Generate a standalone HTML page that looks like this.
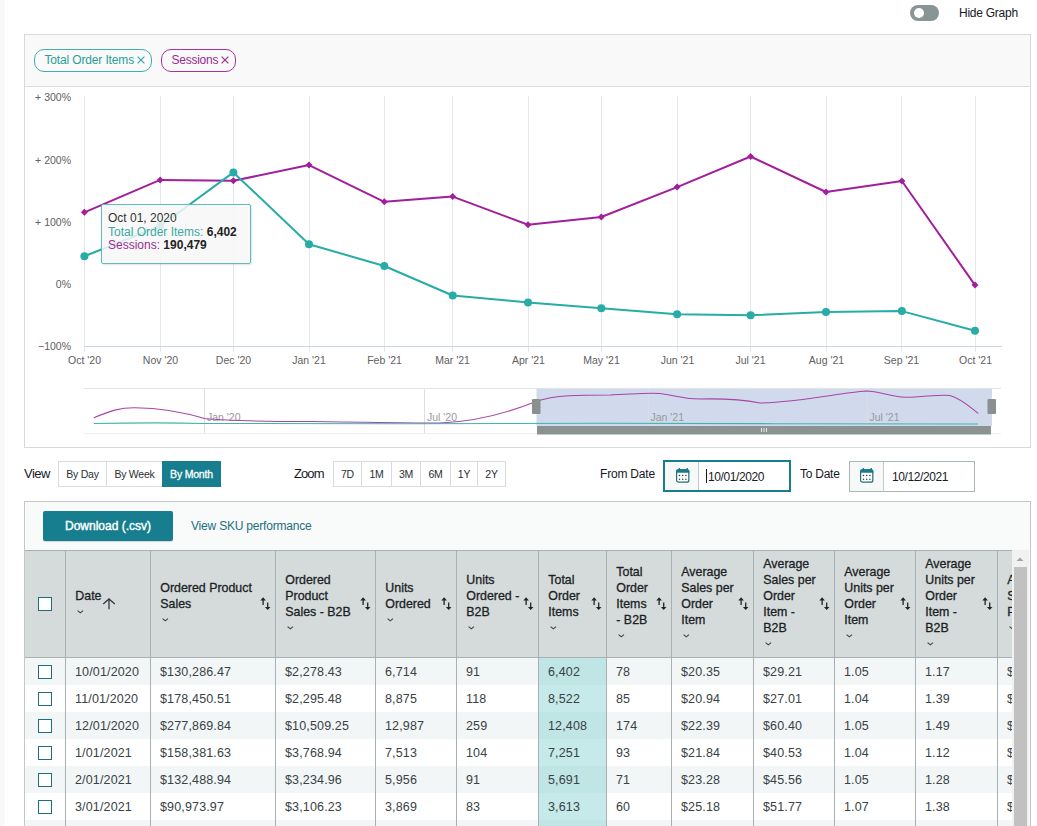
<!DOCTYPE html>
<html><head><meta charset="utf-8">
<style>
*{box-sizing:border-box;margin:0;padding:0}
html,body{width:1037px;height:826px;overflow:hidden;background:#fff;font-family:"Liberation Sans",sans-serif;color:#333}
.a{position:absolute}
#strip{left:0;top:0;width:5px;height:826px;background:#f8f8f8}
#toggle{left:910px;top:5px;width:29px;height:16px;border-radius:8px;background:#879596}
#toggle i{position:absolute;left:3.5px;top:2.7px;width:10.5px;height:10.5px;border-radius:50%;background:#fff}
#hide{left:959px;top:4.5px;font-size:12px;letter-spacing:-0.25px;line-height:16px;color:#16191f}
#chart{left:24px;top:34px;width:1007px;height:414px;border:1px solid #d9d9d9;background:#fff}
#chead{left:0;top:0;width:1005px;height:52px;background:#f9f9f9;border-bottom:1px solid #dcdcdc}
.pill{position:absolute;top:14px;height:23px;border:1.3px solid;border-radius:10px;font-size:12px;letter-spacing:-0.25px;line-height:21px;padding-left:9.5px;white-space:nowrap}
#p1{left:9px;width:118px;border-color:#3fb1ab;color:#2b9e98;letter-spacing:-0.15px}
#p2{left:136px;width:75px;border-color:#a8329f;color:#9a2a92}
#svg{left:0;top:0}
#tip{left:101px;top:204px;width:150px;height:60px;border:1px solid #5dbdb7;background:rgba(247,247,247,0.86);box-shadow:1px 1px 2px rgba(0,0,0,0.12);font-size:12px;line-height:14px;white-space:nowrap;border-radius:2px}
#tip b{color:#222}
.btng{background:transparent}
.btn{position:absolute;top:0;height:26px;border:1px solid #d9dcdc;font-size:10.5px;letter-spacing:-0.25px;line-height:24px;text-align:center;color:#2a2f33;background:#fff}
.btn.on{background:#167e8e;border-color:#167e8e;color:#fff;font-weight:normal;-webkit-text-stroke:0.3px #fff;letter-spacing:-0.2px}
.dinp{background:#fff}
.dic{position:absolute;left:0;top:0;background:#f7f8f8;border-right:1px solid #c3caca}
.dtx{position:absolute;font-size:12px;letter-spacing:-0.4px;line-height:16px;color:#16191f}
.caret{display:inline-block;width:1px;height:14px;background:#16191f;vertical-align:-2px;margin-right:1px}
#dl{left:43px;top:511px;width:130px;height:30px;background:#167e8e;border-radius:2px;color:#fff;font-size:12px;font-weight:normal;-webkit-text-stroke:0.4px #fff;line-height:30px;text-align:center;box-shadow:0 1px 1px rgba(0,0,0,0.15)}
.cbx{position:absolute;left:38px;width:14px;height:14px;border:1.5px solid #1d6f7b;background:#fff}
.hc{top:551px;height:106px;overflow:hidden}
.ht{position:absolute;left:9.3px;top:0;bottom:0;display:flex;flex-direction:column;justify-content:center;font-size:12.4px;font-weight:normal;-webkit-text-stroke:0.3px #1b2225;line-height:16px;color:#1b2225;white-space:nowrap}
.ht{display:flex}
.chev{display:block;margin-top:6px;margin-left:1px}
.sortw{right:4px;top:45.5px}
.rowbg{left:25px;width:988px;height:27px}
.td{height:27px;font-size:12.5px;letter-spacing:0.15px;line-height:28px;padding-left:9px;color:#394245;white-space:nowrap;overflow:hidden}
.vl{top:550px;width:1px;height:280px;background:#a9b0b0}
.chl{height:16px;display:flex;align-items:center;padding-left:2px}
.chev{display:block;margin:0}
</style></head><body>
<div id="strip" class="a"></div>
<div id="toggle" class="a"><i></i></div>
<div id="hide" class="a">Hide Graph</div>
<div id="chart" class="a">
  <div id="chead" class="a">
    <div class="pill" id="p1">Total Order Items<svg class="a" style="left:101.5px;top:6px" width="8" height="8" viewBox="0 0 8 8"><path d="M0.6 0.6 L7.4 7.4 M7.4 0.6 L0.6 7.4" stroke="#3aa9a4" stroke-width="1.2"/></svg></div>
    <div class="pill" id="p2">Sessions<svg class="a" style="left:59px;top:6px" width="8" height="8" viewBox="0 0 8 8"><path d="M0.6 0.6 L7.4 7.4 M7.4 0.6 L0.6 7.4" stroke="#9c2f95" stroke-width="1.2"/></svg></div>
  </div>
</div>
<svg id="svg" class="a" width="1037" height="450" viewBox="0 0 1037 450">
  <g stroke="#e6e6ee" stroke-width="1">
    <line x1="84.5" y1="96" x2="84.5" y2="352"/>
    <line x1="160.5" y1="96" x2="160.5" y2="352"/>
    <line x1="233.5" y1="96" x2="233.5" y2="352"/>
    <line x1="309.5" y1="96" x2="309.5" y2="352"/>
    <line x1="384.5" y1="96" x2="384.5" y2="352"/>
    <line x1="452.5" y1="96" x2="452.5" y2="352"/>
    <line x1="528.5" y1="96" x2="528.5" y2="352"/>
    <line x1="601.5" y1="96" x2="601.5" y2="352"/>
    <line x1="677.5" y1="96" x2="677.5" y2="352"/>
    <line x1="750.5" y1="96" x2="750.5" y2="352"/>
    <line x1="826.5" y1="96" x2="826.5" y2="352"/>
    <line x1="901.5" y1="96" x2="901.5" y2="352"/>
    <line x1="975.5" y1="96" x2="975.5" y2="352"/>
  </g>
  <line x1="84" y1="346.5" x2="1002" y2="346.5" stroke="#ccd6eb" stroke-width="1"/>
  <g font-family="Liberation Sans" font-size="10.5" fill="#606060" text-anchor="end">
    <text x="71" y="100.5">+ 300%</text>
    <text x="71" y="163.5">+ 200%</text>
    <text x="71" y="225.5">+ 100%</text>
    <text x="71" y="288">0%</text>
    <text x="71" y="350">−100%</text>
  </g>
  <g font-family="Liberation Sans" font-size="10.5" fill="#606060" text-anchor="middle">
    <text x="84.5" y="364">Oct '20</text>
    <text x="160.5" y="364">Nov '20</text>
    <text x="233.5" y="364">Dec '20</text>
    <text x="309" y="364">Jan '21</text>
    <text x="384.5" y="364">Feb '21</text>
    <text x="452.5" y="364">Mar '21</text>
    <text x="528.5" y="364">Apr '21</text>
    <text x="601.5" y="364">May '21</text>
    <text x="677.5" y="364">Jun '21</text>
    <text x="750.5" y="364">Jul '21</text>
    <text x="826.5" y="364">Aug '21</text>
    <text x="901.5" y="364">Sep '21</text>
    <text x="975.5" y="364">Oct '21</text>
  </g>
  <polyline fill="none" stroke="#a21f9c" stroke-width="2" stroke-linejoin="round" points="84.4,212.3 160.2,179.9 233.4,180.8 309,165.1 384.3,201.8 452.7,196.6 528,224.7 601.3,217 677.1,187.1 750.6,156.5 826,192 901.9,181 975,285.1"/>
  <g fill="#a21f9c">
    <path d="M84.4 208.8 L87.9 212.3 L84.4 215.8 L80.9 212.3Z"/>
    <path d="M160.2 176.4 L163.7 179.9 L160.2 183.4 L156.7 179.9Z"/>
    <path d="M233.4 177.3 L236.9 180.8 L233.4 184.3 L229.9 180.8Z"/>
    <path d="M309.0 161.6 L312.5 165.1 L309.0 168.6 L305.5 165.1Z"/>
    <path d="M384.3 198.3 L387.8 201.8 L384.3 205.3 L380.8 201.8Z"/>
    <path d="M452.7 193.1 L456.2 196.6 L452.7 200.1 L449.2 196.6Z"/>
    <path d="M528.0 221.2 L531.5 224.7 L528.0 228.2 L524.5 224.7Z"/>
    <path d="M601.3 213.5 L604.8 217.0 L601.3 220.5 L597.8 217.0Z"/>
    <path d="M677.1 183.6 L680.6 187.1 L677.1 190.6 L673.6 187.1Z"/>
    <path d="M750.6 153.0 L754.1 156.5 L750.6 160.0 L747.1 156.5Z"/>
    <path d="M826.0 188.5 L829.5 192.0 L826.0 195.5 L822.5 192.0Z"/>
    <path d="M901.9 177.5 L905.4 181.0 L901.9 184.5 L898.4 181.0Z"/>
    <path d="M975.0 281.6 L978.5 285.1 L975.0 288.6 L971.5 285.1Z"/>
  </g>
  <polyline fill="none" stroke="#27aca6" stroke-width="2" stroke-linejoin="round" points="84.4,256.3 160.2,226 233.4,172.4 309,244.2 384.3,266 452.7,295.5 528,302.4 601.3,308.3 677.1,314.2 750.6,315.3 826,311.9 901.9,311.1 975,330.7"/>
  <g fill="#27aca6">
    <circle cx="84.4" cy="256.3" r="4"/>
    <circle cx="160.2" cy="226" r="4"/>
    <circle cx="233.4" cy="172.4" r="4"/>
    <circle cx="309" cy="244.2" r="4"/>
    <circle cx="384.3" cy="266" r="4"/>
    <circle cx="452.7" cy="295.5" r="4"/>
    <circle cx="528" cy="302.4" r="4"/>
    <circle cx="601.3" cy="308.3" r="4"/>
    <circle cx="677.1" cy="314.2" r="4"/>
    <circle cx="750.6" cy="315.3" r="4"/>
    <circle cx="826" cy="311.9" r="4"/>
    <circle cx="901.9" cy="311.1" r="4"/>
    <circle cx="975" cy="330.7" r="4"/>
  </g>
  <!-- navigator -->
  <rect x="536.5" y="388" width="455.5" height="38" fill="#d1d9ed"/>
  <line x1="84" y1="388.5" x2="1001" y2="388.5" stroke="#e3e3e3"/>
  <line x1="84" y1="433.5" x2="1001" y2="433.5" stroke="#f0f0f0"/>
  <g stroke="#dcdde3">
    <line x1="204.5" y1="389" x2="204.5" y2="433"/>
    <line x1="424.5" y1="389" x2="424.5" y2="433"/>
    <line x1="648.5" y1="389" x2="648.5" y2="433"/>
    <line x1="867.5" y1="389" x2="867.5" y2="433"/>
  </g>
  <g font-family="Liberation Sans" font-size="10.5" fill="#999">
    <text x="207" y="421">Jan '20</text>
    <text x="427" y="421">Jul '20</text>
    <text x="650.5" y="421">Jan '21</text>
    <text x="869.5" y="421">Jul '21</text>
  </g>
  <path fill="none" stroke="#a844a5" stroke-width="1.05" d="M93.8,417.8 C110,411 120,407.5 135,407.7 C160,408 180,411 204.6,418.6 C230,421 270,421.5 310,421.5 C360,422 400,423 440,423 C470,422 500,416 536,401.5 C555,395 580,395 610,395 C630,394.5 645,392.5 660,393.5 C675,395 680,399 700,399 C720,398.5 740,399 760,403 C800,402 840,393 866,391 C880,391 890,397 905,397.3 C925,397 940,394 950,395.5 C960,398 970,407 978.3,413.4"/>
  <path fill="none" stroke="#40b5ae" stroke-width="1.05" d="M93.8,423.5 C130,422.8 180,422.8 204,423.5 C300,423.8 500,424 600,423.2 C700,423.5 900,424 978,424"/>
  <rect x="532" y="399" width="8.5" height="15" rx="1" fill="#8a8f8f"/>
  <rect x="987.5" y="399" width="8.5" height="15" rx="1" fill="#8a8f8f"/>
  <rect x="537" y="426" width="454" height="8.5" fill="#8a9292"/>
  <g stroke="#fff" stroke-width="0.8"><line x1="761.5" y1="428" x2="761.5" y2="432"/><line x1="764" y1="428" x2="764" y2="432"/><line x1="766.5" y1="428" x2="766.5" y2="432"/></g>
</svg>
<div id="tip" class="a"><div class="a" style="left:6px;top:6px;color:#333">Oct 01, 2020</div><div class="a" style="left:6px;top:20px;color:#3aa9a3">Total Order Items: <b>6,402</b></div><div class="a" style="left:6px;top:33px;color:#9b2d93">Sessions: <b>190,479</b></div></div>
<div class="a" style="left:24px;top:466px;font-size:13px;letter-spacing:-0.5px;line-height:16px;color:#16191f">View</div>
<div class="a btng" style="left:58px;top:461px;width:163px;height:26px">
  <div class="btn" style="left:0;width:49px">By Day</div>
  <div class="btn" style="left:48px;width:57px">By Week</div>
  <div class="btn on" style="left:104px;width:59px">By Month</div>
</div>
<div class="a" style="left:294px;top:466px;font-size:13px;letter-spacing:-0.9px;line-height:16px;color:#16191f">Zoom</div>
<div class="a btng" style="left:333px;top:461px;width:173px;height:26px">
  <div class="btn" style="left:0;width:29px">7D</div>
  <div class="btn" style="left:28px;width:31px">1M</div>
  <div class="btn" style="left:58px;width:30px">3M</div>
  <div class="btn" style="left:87px;width:31px">6M</div>
  <div class="btn" style="left:117px;width:28px">1Y</div>
  <div class="btn" style="left:144px;width:29px">2Y</div>
</div>
<div class="a" style="left:600px;top:466px;font-size:12px;letter-spacing:-0.2px;line-height:16px;color:#16191f">From Date</div>
<div class="a dinp" style="left:663px;top:460px;width:128px;height:32px;border:2px solid #167e8e">
  <div class="dic" style="width:34px;height:28px"></div><svg class="a" style="left:10.8px;top:5px" width="15" height="17" viewBox="0 0 15 17"><path d="M3.35 0.9 v2.5 M11.15 0.9 v2.5" stroke="#1b7a8a" stroke-width="1.4"/><rect x="0.6" y="2.9" width="12.2" height="12.3" rx="2" fill="#fff" stroke="#1d6f7c" stroke-width="1.2"/><path d="M0 5.7 V4.3 Q0 2.3 2 2.3 H11.4 Q13.4 2.3 13.4 4.3 V5.7Z" fill="#1b7a8a"/><g fill="#2d3b40"><circle cx="3.5" cy="8.4" r=".75"/><circle cx="6.7" cy="8.4" r=".75"/><circle cx="9.9" cy="8.4" r=".75"/><circle cx="3.5" cy="12.2" r=".75"/><circle cx="6.7" cy="12.2" r=".75"/><circle cx="9.9" cy="12.2" r=".75"/></g></svg>
  <div class="dtx" style="left:41px;top:7px"><span class="caret"></span>10/01/2020</div>
</div>
<div class="a" style="left:800px;top:466px;font-size:12px;letter-spacing:-0.25px;line-height:16px;color:#16191f">To Date</div>
<div class="a dinp" style="left:849px;top:461px;width:126px;height:31px;border:1px solid #aab7b8">
  <div class="dic" style="width:34px;height:29px"></div><svg class="a" style="left:10px;top:5px" width="15" height="17" viewBox="0 0 15 17"><path d="M3.35 0.9 v2.5 M11.15 0.9 v2.5" stroke="#1b7a8a" stroke-width="1.4"/><rect x="0.6" y="2.9" width="12.2" height="12.3" rx="2" fill="#fff" stroke="#1d6f7c" stroke-width="1.2"/><path d="M0 5.7 V4.3 Q0 2.3 2 2.3 H11.4 Q13.4 2.3 13.4 4.3 V5.7Z" fill="#1b7a8a"/><g fill="#2d3b40"><circle cx="3.5" cy="8.4" r=".75"/><circle cx="6.7" cy="8.4" r=".75"/><circle cx="9.9" cy="8.4" r=".75"/><circle cx="3.5" cy="12.2" r=".75"/><circle cx="6.7" cy="12.2" r=".75"/><circle cx="9.9" cy="12.2" r=".75"/></g></svg>
  <div class="dtx" style="left:42px;top:7px">10/12/2021</div>
</div>
<div class="a" id="tbl" style="left:24px;top:501px;width:1007px;height:340px;border:1px solid #c6c6c6;background:#f9fafa"></div>
<div class="a" id="dl">Download (.csv)</div>
<div class="a" style="left:191px;top:518px;font-size:12px;letter-spacing:-0.2px;line-height:16px;color:#1c6f7f">View SKU performance</div>
<div class="a" style="left:25px;top:550px;width:988px;height:108px;background:#d5dbdb;border-top:1px solid #a9b0b0;border-bottom:1px solid #a9b0b0"></div>
<div class="a" style="left:25px;top:558px;width:0;height:0"></div>
<div class="a cbx" style="left:38px;top:597px"></div>
<div class="hc a" style="left:66px;width:84px"><div class="ht"><div>Date</div><div class="chl"><svg class="chev" width="7" height="4" viewBox="0 0 7 4"><path d="M0.6 0.6 L3.3 2.9 L6 0.6" fill="none" stroke="#3a4044" stroke-width="1.1"/></svg></div></div><svg class="a" style="left:36px;top:47px" width="14" height="12" viewBox="0 0 14 12"><path d="M1.2 6.1 L7 0.9 L12.8 6.1 M7 1.2 V11.2" fill="none" stroke="#353b3f" stroke-width="1.3"/></svg></div>
<div class="hc a" style="left:151px;width:124px"><div class="ht"><div>Ordered Product<br>Sales</div><div class="chl"><svg class="chev" width="7" height="4" viewBox="0 0 7 4"><path d="M0.6 0.6 L3.3 2.9 L6 0.6" fill="none" stroke="#3a4044" stroke-width="1.1"/></svg></div></div><div class="a sortw"><svg class="sort" width="11" height="14" viewBox="0 0 11 14"><path d="M3.1 0.2 L5.9 3.5 L0.3 3.5Z M2.45 3 h1.3 v5 h-1.3z M7.7 13.1 L4.9 9.9 L10.5 9.9Z M7.05 5.6 h1.3 v4.8 h-1.3z" fill="#1f2629"/></svg></div></div>
<div class="hc a" style="left:276px;width:99px"><div class="ht"><div>Ordered<br>Product<br>Sales - B2B</div><div class="chl"><svg class="chev" width="7" height="4" viewBox="0 0 7 4"><path d="M0.6 0.6 L3.3 2.9 L6 0.6" fill="none" stroke="#3a4044" stroke-width="1.1"/></svg></div></div><div class="a sortw"><svg class="sort" width="11" height="14" viewBox="0 0 11 14"><path d="M3.1 0.2 L5.9 3.5 L0.3 3.5Z M2.45 3 h1.3 v5 h-1.3z M7.7 13.1 L4.9 9.9 L10.5 9.9Z M7.05 5.6 h1.3 v4.8 h-1.3z" fill="#1f2629"/></svg></div></div>
<div class="hc a" style="left:376px;width:80px"><div class="ht"><div>Units<br>Ordered</div><div class="chl"><svg class="chev" width="7" height="4" viewBox="0 0 7 4"><path d="M0.6 0.6 L3.3 2.9 L6 0.6" fill="none" stroke="#3a4044" stroke-width="1.1"/></svg></div></div><div class="a sortw"><svg class="sort" width="11" height="14" viewBox="0 0 11 14"><path d="M3.1 0.2 L5.9 3.5 L0.3 3.5Z M2.45 3 h1.3 v5 h-1.3z M7.7 13.1 L4.9 9.9 L10.5 9.9Z M7.05 5.6 h1.3 v4.8 h-1.3z" fill="#1f2629"/></svg></div></div>
<div class="hc a" style="left:457px;width:81px"><div class="ht"><div>Units<br>Ordered -<br>B2B</div><div class="chl"><svg class="chev" width="7" height="4" viewBox="0 0 7 4"><path d="M0.6 0.6 L3.3 2.9 L6 0.6" fill="none" stroke="#3a4044" stroke-width="1.1"/></svg></div></div><div class="a sortw"><svg class="sort" width="11" height="14" viewBox="0 0 11 14"><path d="M3.1 0.2 L5.9 3.5 L0.3 3.5Z M2.45 3 h1.3 v5 h-1.3z M7.7 13.1 L4.9 9.9 L10.5 9.9Z M7.05 5.6 h1.3 v4.8 h-1.3z" fill="#1f2629"/></svg></div></div>
<div class="hc a" style="left:539px;width:67px"><div class="ht"><div>Total<br>Order<br>Items</div><div class="chl"><svg class="chev" width="7" height="4" viewBox="0 0 7 4"><path d="M0.6 0.6 L3.3 2.9 L6 0.6" fill="none" stroke="#3a4044" stroke-width="1.1"/></svg></div></div><div class="a sortw"><svg class="sort" width="11" height="14" viewBox="0 0 11 14"><path d="M3.1 0.2 L5.9 3.5 L0.3 3.5Z M2.45 3 h1.3 v5 h-1.3z M7.7 13.1 L4.9 9.9 L10.5 9.9Z M7.05 5.6 h1.3 v4.8 h-1.3z" fill="#1f2629"/></svg></div></div>
<div class="hc a" style="left:607px;width:64px"><div class="ht"><div>Total<br>Order<br>Items<br>- B2B</div><div class="chl"><svg class="chev" width="7" height="4" viewBox="0 0 7 4"><path d="M0.6 0.6 L3.3 2.9 L6 0.6" fill="none" stroke="#3a4044" stroke-width="1.1"/></svg></div></div><div class="a sortw"><svg class="sort" width="11" height="14" viewBox="0 0 11 14"><path d="M3.1 0.2 L5.9 3.5 L0.3 3.5Z M2.45 3 h1.3 v5 h-1.3z M7.7 13.1 L4.9 9.9 L10.5 9.9Z M7.05 5.6 h1.3 v4.8 h-1.3z" fill="#1f2629"/></svg></div></div>
<div class="hc a" style="left:672px;width:81px"><div class="ht"><div>Average<br>Sales per<br>Order<br>Item</div><div class="chl"><svg class="chev" width="7" height="4" viewBox="0 0 7 4"><path d="M0.6 0.6 L3.3 2.9 L6 0.6" fill="none" stroke="#3a4044" stroke-width="1.1"/></svg></div></div><div class="a sortw"><svg class="sort" width="11" height="14" viewBox="0 0 11 14"><path d="M3.1 0.2 L5.9 3.5 L0.3 3.5Z M2.45 3 h1.3 v5 h-1.3z M7.7 13.1 L4.9 9.9 L10.5 9.9Z M7.05 5.6 h1.3 v4.8 h-1.3z" fill="#1f2629"/></svg></div></div>
<div class="hc a" style="left:754px;width:80px"><div class="ht"><div>Average<br>Sales per<br>Order<br>Item -<br>B2B</div><div class="chl"><svg class="chev" width="7" height="4" viewBox="0 0 7 4"><path d="M0.6 0.6 L3.3 2.9 L6 0.6" fill="none" stroke="#3a4044" stroke-width="1.1"/></svg></div></div><div class="a sortw"><svg class="sort" width="11" height="14" viewBox="0 0 11 14"><path d="M3.1 0.2 L5.9 3.5 L0.3 3.5Z M2.45 3 h1.3 v5 h-1.3z M7.7 13.1 L4.9 9.9 L10.5 9.9Z M7.05 5.6 h1.3 v4.8 h-1.3z" fill="#1f2629"/></svg></div></div>
<div class="hc a" style="left:835px;width:80px"><div class="ht"><div>Average<br>Units per<br>Order<br>Item</div><div class="chl"><svg class="chev" width="7" height="4" viewBox="0 0 7 4"><path d="M0.6 0.6 L3.3 2.9 L6 0.6" fill="none" stroke="#3a4044" stroke-width="1.1"/></svg></div></div><div class="a sortw"><svg class="sort" width="11" height="14" viewBox="0 0 11 14"><path d="M3.1 0.2 L5.9 3.5 L0.3 3.5Z M2.45 3 h1.3 v5 h-1.3z M7.7 13.1 L4.9 9.9 L10.5 9.9Z M7.05 5.6 h1.3 v4.8 h-1.3z" fill="#1f2629"/></svg></div></div>
<div class="hc a" style="left:916px;width:81px"><div class="ht"><div>Average<br>Units per<br>Order<br>Item -<br>B2B</div><div class="chl"><svg class="chev" width="7" height="4" viewBox="0 0 7 4"><path d="M0.6 0.6 L3.3 2.9 L6 0.6" fill="none" stroke="#3a4044" stroke-width="1.1"/></svg></div></div><div class="a sortw"><svg class="sort" width="11" height="14" viewBox="0 0 11 14"><path d="M3.1 0.2 L5.9 3.5 L0.3 3.5Z M2.45 3 h1.3 v5 h-1.3z M7.7 13.1 L4.9 9.9 L10.5 9.9Z M7.05 5.6 h1.3 v4.8 h-1.3z" fill="#1f2629"/></svg></div></div>
<div class="hc a" style="left:998px;width:15px;overflow:hidden"><div class="ht"><div>Average<br>Selling<br>Price</div><div class="chl"><svg class="chev" width="7" height="4" viewBox="0 0 7 4"><path d="M0.6 0.6 L3.3 2.9 L6 0.6" fill="none" stroke="#3a4044" stroke-width="1.1"/></svg></div></div></div>
<div class="a rowbg" style="top:658px;background:#f2f6f7"></div>
<div class="a cbx" style="top:665px"></div>
<div class="td a" style="left:66px;top:658px;width:84px">10/01/2020</div>
<div class="td a" style="left:151px;top:658px;width:124px">$130,286.47</div>
<div class="td a" style="left:276px;top:658px;width:99px">$2,278.43</div>
<div class="td a" style="left:376px;top:658px;width:80px">6,714</div>
<div class="td a" style="left:457px;top:658px;width:81px">91</div>
<div class="td a" style="left:539px;top:658px;width:67px;background:#bfe5e5">6,402</div>
<div class="td a" style="left:607px;top:658px;width:64px">78</div>
<div class="td a" style="left:672px;top:658px;width:81px">$20.35</div>
<div class="td a" style="left:754px;top:658px;width:80px">$29.21</div>
<div class="td a" style="left:835px;top:658px;width:80px">1.05</div>
<div class="td a" style="left:916px;top:658px;width:81px">1.17</div>
<div class="td a" style="left:998px;top:658px;width:82px">$</div>
<div class="a rowbg" style="top:685px;background:#ffffff"></div>
<div class="a cbx" style="top:692px"></div>
<div class="td a" style="left:66px;top:685px;width:84px">11/01/2020</div>
<div class="td a" style="left:151px;top:685px;width:124px">$178,450.51</div>
<div class="td a" style="left:276px;top:685px;width:99px">$2,295.48</div>
<div class="td a" style="left:376px;top:685px;width:80px">8,875</div>
<div class="td a" style="left:457px;top:685px;width:81px">118</div>
<div class="td a" style="left:539px;top:685px;width:67px;background:#c6e9e9">8,522</div>
<div class="td a" style="left:607px;top:685px;width:64px">85</div>
<div class="td a" style="left:672px;top:685px;width:81px">$20.94</div>
<div class="td a" style="left:754px;top:685px;width:80px">$27.01</div>
<div class="td a" style="left:835px;top:685px;width:80px">1.04</div>
<div class="td a" style="left:916px;top:685px;width:81px">1.39</div>
<div class="td a" style="left:998px;top:685px;width:82px">$</div>
<div class="a rowbg" style="top:712px;background:#f2f6f7"></div>
<div class="a cbx" style="top:719px"></div>
<div class="td a" style="left:66px;top:712px;width:84px">12/01/2020</div>
<div class="td a" style="left:151px;top:712px;width:124px">$277,869.84</div>
<div class="td a" style="left:276px;top:712px;width:99px">$10,509.25</div>
<div class="td a" style="left:376px;top:712px;width:80px">12,987</div>
<div class="td a" style="left:457px;top:712px;width:81px">259</div>
<div class="td a" style="left:539px;top:712px;width:67px;background:#bfe5e5">12,408</div>
<div class="td a" style="left:607px;top:712px;width:64px">174</div>
<div class="td a" style="left:672px;top:712px;width:81px">$22.39</div>
<div class="td a" style="left:754px;top:712px;width:80px">$60.40</div>
<div class="td a" style="left:835px;top:712px;width:80px">1.05</div>
<div class="td a" style="left:916px;top:712px;width:81px">1.49</div>
<div class="td a" style="left:998px;top:712px;width:82px">$</div>
<div class="a rowbg" style="top:739px;background:#ffffff"></div>
<div class="a cbx" style="top:746px"></div>
<div class="td a" style="left:66px;top:739px;width:84px">1/01/2021</div>
<div class="td a" style="left:151px;top:739px;width:124px">$158,381.63</div>
<div class="td a" style="left:276px;top:739px;width:99px">$3,768.94</div>
<div class="td a" style="left:376px;top:739px;width:80px">7,513</div>
<div class="td a" style="left:457px;top:739px;width:81px">104</div>
<div class="td a" style="left:539px;top:739px;width:67px;background:#c6e9e9">7,251</div>
<div class="td a" style="left:607px;top:739px;width:64px">93</div>
<div class="td a" style="left:672px;top:739px;width:81px">$21.84</div>
<div class="td a" style="left:754px;top:739px;width:80px">$40.53</div>
<div class="td a" style="left:835px;top:739px;width:80px">1.04</div>
<div class="td a" style="left:916px;top:739px;width:81px">1.12</div>
<div class="td a" style="left:998px;top:739px;width:82px">$</div>
<div class="a rowbg" style="top:766px;background:#f2f6f7"></div>
<div class="a cbx" style="top:773px"></div>
<div class="td a" style="left:66px;top:766px;width:84px">2/01/2021</div>
<div class="td a" style="left:151px;top:766px;width:124px">$132,488.94</div>
<div class="td a" style="left:276px;top:766px;width:99px">$3,234.96</div>
<div class="td a" style="left:376px;top:766px;width:80px">5,956</div>
<div class="td a" style="left:457px;top:766px;width:81px">91</div>
<div class="td a" style="left:539px;top:766px;width:67px;background:#bfe5e5">5,691</div>
<div class="td a" style="left:607px;top:766px;width:64px">71</div>
<div class="td a" style="left:672px;top:766px;width:81px">$23.28</div>
<div class="td a" style="left:754px;top:766px;width:80px">$45.56</div>
<div class="td a" style="left:835px;top:766px;width:80px">1.05</div>
<div class="td a" style="left:916px;top:766px;width:81px">1.28</div>
<div class="td a" style="left:998px;top:766px;width:82px">$</div>
<div class="a rowbg" style="top:793px;background:#ffffff"></div>
<div class="a cbx" style="top:800px"></div>
<div class="td a" style="left:66px;top:793px;width:84px">3/01/2021</div>
<div class="td a" style="left:151px;top:793px;width:124px">$90,973.97</div>
<div class="td a" style="left:276px;top:793px;width:99px">$3,106.23</div>
<div class="td a" style="left:376px;top:793px;width:80px">3,869</div>
<div class="td a" style="left:457px;top:793px;width:81px">83</div>
<div class="td a" style="left:539px;top:793px;width:67px;background:#c6e9e9">3,613</div>
<div class="td a" style="left:607px;top:793px;width:64px">60</div>
<div class="td a" style="left:672px;top:793px;width:81px">$25.18</div>
<div class="td a" style="left:754px;top:793px;width:80px">$51.77</div>
<div class="td a" style="left:835px;top:793px;width:80px">1.07</div>
<div class="td a" style="left:916px;top:793px;width:81px">1.38</div>
<div class="td a" style="left:998px;top:793px;width:82px">$</div>
<div class="a rowbg" style="top:820px;background:#f2f6f7"></div>
<div class="a cbx" style="top:827px"></div>
<div class="td a" style="left:66px;top:820px;width:84px">4/01/2021</div>
<div class="td a" style="left:151px;top:820px;width:124px">$85,000.00</div>
<div class="td a" style="left:276px;top:820px;width:99px">$2,900.00</div>
<div class="td a" style="left:376px;top:820px;width:80px">3,500</div>
<div class="td a" style="left:457px;top:820px;width:81px">80</div>
<div class="td a" style="left:539px;top:820px;width:67px;background:#bfe5e5">3,300</div>
<div class="td a" style="left:607px;top:820px;width:64px">55</div>
<div class="td a" style="left:672px;top:820px;width:81px">$25.00</div>
<div class="td a" style="left:754px;top:820px;width:80px">$50.00</div>
<div class="td a" style="left:835px;top:820px;width:80px">1.06</div>
<div class="td a" style="left:916px;top:820px;width:81px">1.30</div>
<div class="td a" style="left:998px;top:820px;width:82px">$</div>
<div class="a vl" style="left:65px"></div>
<div class="a vl" style="left:150px"></div>
<div class="a vl" style="left:275px"></div>
<div class="a vl" style="left:375px"></div>
<div class="a vl" style="left:456px"></div>
<div class="a vl" style="left:538px"></div>
<div class="a vl" style="left:606px"></div>
<div class="a vl" style="left:671px"></div>
<div class="a vl" style="left:753px"></div>
<div class="a vl" style="left:834px"></div>
<div class="a vl" style="left:915px"></div>
<div class="a vl" style="left:997px"></div><div class="a" style="left:1012px;top:550px;width:17px;height:280px;background:#f1f1f1"></div>
<div class="a" style="left:1014px;top:567px;width:13px;height:270px;background:#c1c1c1"></div>
<svg class="a" style="left:1015px;top:556px" width="10" height="6" viewBox="0 0 10 6"><path d="M1.5 5 L5 1.5 L8.5 5Z" fill="#a3a3a3"/></svg>

</body></html>
